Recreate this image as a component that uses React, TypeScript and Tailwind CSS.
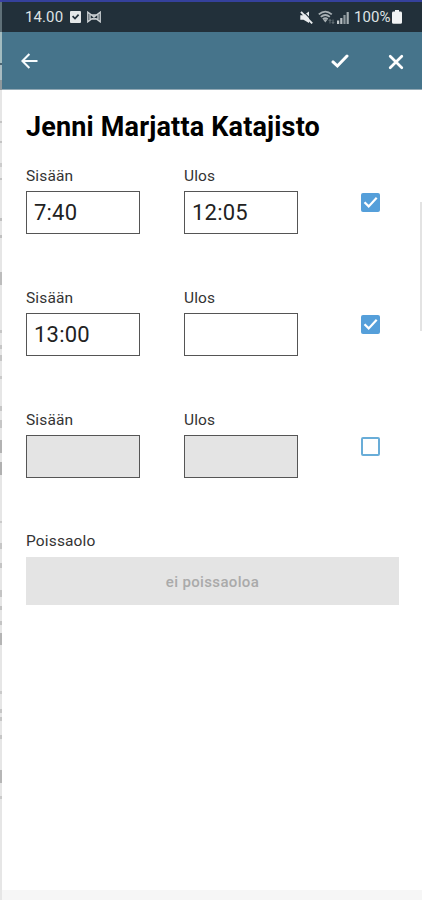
import React, { useState } from "react";

type Entry = {
  id: number;
  sisaan: string;
  ulos: string;
  checked: boolean;
};

const initialEntries: Entry[] = [
  { id: 1, sisaan: "7:40", ulos: "12:05", checked: true },
  { id: 2, sisaan: "13:00", ulos: "", checked: true },
  { id: 3, sisaan: "", ulos: "", checked: false },
];

// Slivers of the page behind the dialog: [top, height, color]
const backdropMarks: [number, number, string][] = [
  [0, 2, "#3b3fa5"],
  [2, 30, "#5f7078"],
  [32, 31, "#a3bcc0"],
  [63, 2, "#4b6472"],
  [65, 15, "#a9bcc2"],
  [80, 10, "#8f989c"],
  [121, 2, "#c4c4c4"],
  [141, 2, "#c4c4c4"],
  [163, 4, "#cccccc"],
  [178, 2, "#c4c4c4"],
  [218, 3, "#c0c0c0"],
  [235, 3, "#c0c0c0"],
  [272, 13, "#bcbcbc"],
  [330, 3, "#c6c6c6"],
  [345, 4, "#c6c6c6"],
  [355, 6, "#c6c6c6"],
  [376, 3, "#cacaca"],
  [406, 5, "#c6c6c6"],
  [420, 8, "#c6c6c6"],
  [440, 13, "#b2b2b2"],
  [462, 13, "#b0b0b0"],
  [521, 2, "#cacaca"],
  [543, 6, "#c6c6c6"],
  [563, 5, "#c4c4c4"],
  [590, 7, "#c4c4c4"],
  [606, 4, "#c4c4c4"],
  [621, 4, "#c4c4c4"],
  [633, 12, "#b4b4b4"],
  [691, 3, "#cacaca"],
  [709, 4, "#c6c6c6"],
  [717, 4, "#c6c6c6"],
  [735, 4, "#c6c6c6"],
  [770, 13, "#b6b6b6"],
  [796, 3, "#cacaca"],
];

function StatusBar() {
  return (
    <div className="h-8 border-t-2 border-[#35419c] bg-[#22303a] pl-[23px] pr-[20px] flex items-center justify-between text-[#dfe3e5]">
      <div className="flex items-center">
        <span className="text-[15px] leading-none w-[45px] tracking-[0.1px]">14.00</span>
        <svg width="11" height="12" viewBox="0 0 11 12">
          <rect width="11" height="12" rx="1" fill="#e4e7e8" />
          <path d="M2.6 5.2 5 7.6 8.6 3.7" fill="none" stroke="#22303a" strokeWidth="1.7" />
        </svg>
        <svg className="ml-[6px]" width="14" height="12" viewBox="0 0 14 12">
          <path
            d="M.8 10.8V1.2L4.6 4h4.8l3.8-2.8v9.6L9.4 8H4.6zM3 2.8v6.5M11 2.8v6.5M4 8.5 10 3.5M4 3.5l6 5"
            fill="none"
            stroke="#cbd0d3"
            strokeWidth="1.4"
          />
        </svg>
      </div>
      <div className="flex items-center">
        <svg width="13" height="13" viewBox="0 0 13 13">
          <path d="M.3 4.3h3.2L9 .5v11.6L3.5 8.8H.3z" fill="#e9ecee" />
          <path d="m3 0 10.5 11" stroke="#22303a" strokeWidth="1.1" />
          <path d="m1 .8 11.2 11.6" stroke="#e9ecee" strokeWidth="1.9" />
        </svg>
        <svg className="ml-[5px]" width="17" height="14" viewBox="0 0 17 14">
          <g fill="none" stroke="#a9b1b5" strokeWidth="1.8">
            <path d="M.8 4.4Q7.3-1.2 13.8 4.4" />
            <path d="M2.8 6.9q4.5-3.8 9 0" />
            <path d="M4.9 9.2q2.4-2 4.8 0" />
          </g>
          <path d="M7.3 12.4 5.4 10q1.9-1.4 3.8 0z" fill="#a9b1b5" />
          <path d="M12 9.5v4M10.7 11l1.3-1.5 1.3 1.5M15 13.5v-4M13.8 12l1.2 1.5 1.2-1.5" stroke="#6f7a80" strokeWidth=".9" fill="none" />
        </svg>
        <svg className="ml-0.5" width="12" height="13" viewBox="0 0 12 13">
          <path d="M0 9.5h2.2V13H0z" fill="#c4cacd" />
          <path d="M3.2 7h2.2v6H3.2z" fill="#b4bbbf" />
          <path d="M6.4 4h2.2v9H6.4z" fill="#8d979c" />
          <path d="M9.6 1h2.2v12H9.6z" fill="#a4adb1" />
        </svg>
        <span className="ml-[5px] w-[38px] text-[15px] leading-none whitespace-nowrap tracking-[0.1px]">100%</span>
        <svg width="10" height="14" viewBox="0 0 10 14">
          <path d="M3 0h4v1.6h1.4Q10 1.6 10 3v9.4q0 1.4-1.6 1.4H1.6Q0 13.8 0 12.4V3q0-1.4 1.6-1.4H3z" fill="#f1f3f4" />
        </svg>
      </div>
    </div>
  );
}

function TopBar() {
  return (
    <div className="h-[58px] bg-[#46748b] border-b border-[#93a9b5] pl-[19px] pr-[18px] flex items-center">
      <button aria-label="Takaisin">
        <svg width="17" height="16" viewBox="0 0 17 16" fill="none" stroke="#f6fbfd" strokeWidth="2.1">
          <path d="M16.5 8H1.8M8.4 1 1.4 8l7 7" />
        </svg>
      </button>
      <button aria-label="Tallenna" className="ml-auto mt-0.5">
        <svg width="18" height="15" viewBox="0 0 18 15" fill="none" stroke="#fff" strokeWidth="3" strokeLinecap="round">
          <path d="M2 7.9 6.4 12 16 2" />
        </svg>
      </button>
      <button aria-label="Sulje" className="ml-[39px] mt-0.5">
        <svg width="16" height="16" viewBox="0 0 16 16" fill="none" stroke="#fff" strokeWidth="2.7" strokeLinecap="round">
          <path d="m2.2 2.2 11.6 11.6M13.8 2.2 2.2 13.8" />
        </svg>
      </button>
    </div>
  );
}

function TimeField({ label, value, disabled }: { label: string; value: string; disabled: boolean }) {
  return (
    <div className="w-[114px]">
      <div className="h-5 text-[15.5px] leading-5 tracking-[0.15px] text-[#333]">{label}</div>
      <div
        className={`mt-[5px] h-[43px] border border-[#555] pl-[7px] text-[22px] leading-[41px] tracking-[0.2px] text-[#222] ${
          disabled ? "bg-[#e4e4e4]" : "bg-white"
        }`}
      >
        {value}
      </div>
    </div>
  );
}

function CheckBox({ checked, onClick }: { checked: boolean; onClick: () => void }) {
  return (
    <button
      role="checkbox"
      aria-checked={checked}
      onClick={onClick}
      className={`ml-[63px] mt-[27px] size-[19px] rounded-[2px] ${
        checked ? "bg-[#559fda]" : "border-2 border-[#69add8] bg-white"
      }`}
    >
      {checked && (
        <svg width="19" height="19" viewBox="0 0 19 19" fill="none" stroke="#fff" strokeWidth="2.2">
          <path d="m3.5 9.2 4.2 4.2 8-8.6" />
        </svg>
      )}
    </button>
  );
}

export default function App() {
  const [entries, setEntries] = useState<Entry[]>(initialEntries);

  const toggle = (id: number) => {
    setEntries((prev) => prev.map((e) => (e.id === id ? { ...e, checked: !e.checked } : e)));
  };

  return (
    <div className="relative flex h-[900px] w-[422px] overflow-hidden bg-white font-['Roboto',sans-serif]">
      <div className="relative w-0.5 shrink-0 bg-[#e6e6e6]">
        {backdropMarks.map(([top, height, color]) => (
          <div key={top} className="absolute left-0 w-0.5" style={{ top, height, backgroundColor: color }} />
        ))}
      </div>

      <div className="flex flex-1 flex-col">
        <StatusBar />
        <TopBar />

        <div className="flex-1 pl-6 pr-[23px] pt-[19px]">
          <h1 className="h-9 text-[27px] font-bold leading-9 tracking-[0.17px] text-black whitespace-nowrap">
            Jenni Marjatta Katajisto
          </h1>

          <div className="mt-[21px]">
            {entries.map((entry) => (
              <div key={entry.id} className="flex h-[122px] items-start">
                <TimeField label="Sisään" value={entry.sisaan} disabled={!entry.checked} />
                <div className="ml-11">
                  <TimeField label="Ulos" value={entry.ulos} disabled={!entry.checked} />
                </div>
                <CheckBox checked={entry.checked} onClick={() => toggle(entry.id)} />
              </div>
            ))}
          </div>

          <div className="-mt-px h-5 text-[15.5px] leading-5 tracking-[0.15px] text-[#333]">Poissaolo</div>
          <button className="mt-[6px] block h-12 w-full bg-[#e4e4e4] pt-0.5 text-[15px] font-medium tracking-[0.35px] text-[#aaa]">
            ei poissaoloa
          </button>
        </div>

        <div className="h-2.5 bg-[#f6f6f6]" />
      </div>

      {/* Scrollbar */}
      <div className="absolute right-0 top-[202px] h-[129px] w-0.5 bg-[#e3e3e3]" />
    </div>
  );
}
